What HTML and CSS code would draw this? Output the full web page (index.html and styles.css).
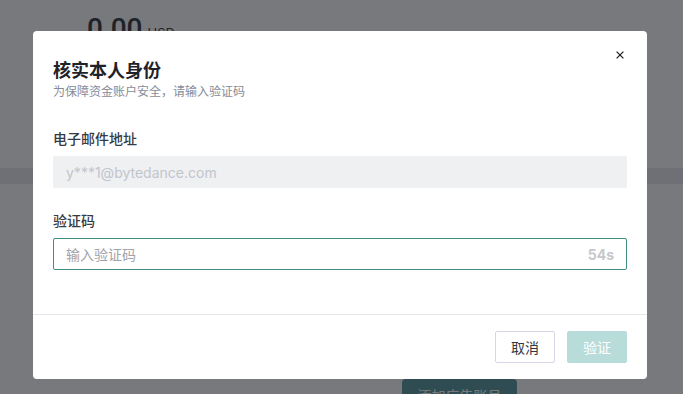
FILE: index.html
```html
<!DOCTYPE html>
<html lang="zh-CN">
<head>
  <meta charset="UTF-8">
  <meta content="width=device-width, initial-scale=1.0" name="viewport">
  <title>核实本人身份</title>
  <link rel="stylesheet" href="styles.css">
</head>
<body>
  <div class="page">
    <div class="balance">
      <span class="amount">0.00</span><span class="unit">USD</span>
    </div>
    <div class="band"></div>
    <div class="actions">
      <button class="add-btn" type="button">添加广告账号</button>
    </div>
  </div>

  <!-- dialog over the page -->
  <div class="mask"></div>
  <div class="modal">
    <button class="close-btn" type="button" aria-label="关闭">
      <svg width="8" height="8" viewBox="0 0 8 8">
        <path d="M0.6 0.6 L7.4 7.4 M7.4 0.6 L0.6 7.4" stroke="#1f2329" stroke-width="1.3" fill="none"/>
      </svg>
    </button>
    <div class="modal-header">
      <h1 class="modal-title">核实本人身份</h1>
      <p class="modal-sub">为保障资金账户安全，请输入验证码</p>
    </div>
    <div class="modal-body">
      <div class="form-item">
        <label class="form-label">电子邮件地址</label>
        <div class="field field-disabled">y***1@bytedance.com</div>
      </div>
      <div class="form-item">
        <label class="form-label">验证码</label>
        <div class="field field-active">
          <input class="code-input" type="text" placeholder="输入验证码">
          <span class="countdown">54s</span>
        </div>
      </div>
    </div>
    <div class="modal-footer">
      <button class="btn btn-cancel" type="button">取消</button>
      <button class="btn btn-ok" type="button">验证</button>
    </div>
  </div>
</body>
</html>
```

FILE: styles.css
```css
body {
    margin: 0;
    background: #ffffff;
    font-family: Inter, "Noto Sans CJK SC", sans-serif;
    color: #1f2329;
}

/* page behind the dialog */
.page {
    height: 394px;
    overflow: hidden;
}
.balance {
    padding: 9px 0 0 87px;
    height: 160px;
    box-sizing: border-box;
    display: flex;
    align-items: baseline;
}
.amount {
    font-family: Roboto, sans-serif;
    font-size: 28px;
    font-weight: 500;
    line-height: 40px;
    color: #45474d;
}
.unit {
    font-size: 13px;
    margin-left: 5px;
    color: #45474d;
}
.band {
    height: 16px;
    margin-top: 8px;
    background: #ececef;
}
.actions {
    padding: 195px 0 0 402px;
}
.add-btn {
    width: 115px;
    height: 32px;
    border: none;
    border-radius: 4px;
    background: #629fa2;
    color: #ffffff;
    font-family: "Noto Sans CJK SC", sans-serif;
    font-size: 14px;
}

.mask {
    position: fixed;
    top: 0;
    left: 0;
    right: 0;
    bottom: 0;
    background: rgba(0, 2, 10, 0.53);
}

/* dialog */
.modal {
    position: fixed;
    top: 31px;
    left: 33px;
    width: 614px;
    background: #ffffff;
    border-radius: 4px;
}
.close-btn {
    position: absolute;
    top: 19px;
    right: 22px;
    width: 10px;
    height: 10px;
    padding: 1px;
    border: none;
    background: none;
    display: flex;
    align-items: center;
    justify-content: center;
}
.modal-header {
    padding: 25px 20px 0;
}
.modal-title {
    margin: 0;
    font-family: "Noto Sans CJK SC", sans-serif;
    font-size: 18px;
    font-weight: 600;
    line-height: 26px;
    color: #1f2329;
}
.modal-sub {
    margin: 0;
    font-family: "Noto Sans CJK SC", sans-serif;
    font-size: 12px;
    line-height: 18px;
    color: #868b99;
}
.modal-body {
    padding: 28px 20px 44px;
}
.form-item + .form-item {
    margin-top: 22px;
}
.form-label {
    display: block;
    font-family: "Noto Sans CJK SC", sans-serif;
    font-size: 14px;
    font-weight: 500;
    line-height: 20px;
    margin-bottom: 8px;
    color: #373b45;
}
.field {
    height: 32px;
    box-sizing: border-box;
    border: 1px solid transparent;
    border-radius: 2px;
    padding: 0 12px;
    display: flex;
    align-items: center;
    font-size: 14px;
}
.field-disabled {
    background: #eff0f2;
    color: #c2c5cc;
}
.field-active {
    border-color: #3f8d83;
}
.code-input {
    flex: 1;
    border: none;
    outline: none;
    padding: 0;
    font-family: "Noto Sans CJK SC", sans-serif;
    font-size: 14px;
    color: #1f2329;
}
.code-input::placeholder {
    color: #9fa3ab;
}
.countdown {
    font-weight: 700;
    color: #c6c7cb;
}
.modal-footer {
    border-top: 1px solid #e5e5eb;
    padding: 16px 20px;
    display: flex;
    justify-content: flex-end;
    gap: 12px;
}
.btn {
    width: 60px;
    height: 32px;
    border-radius: 2px;
    font-family: "Noto Sans CJK SC", sans-serif;
    font-size: 14px;
    cursor: pointer;
}
.btn-cancel {
    background: #ffffff;
    border: 1px solid #d6d6e6;
    color: #33363f;
}
.btn-ok {
    background: #b7dcd9;
    border: none;
    color: #ffffff;
}
```
